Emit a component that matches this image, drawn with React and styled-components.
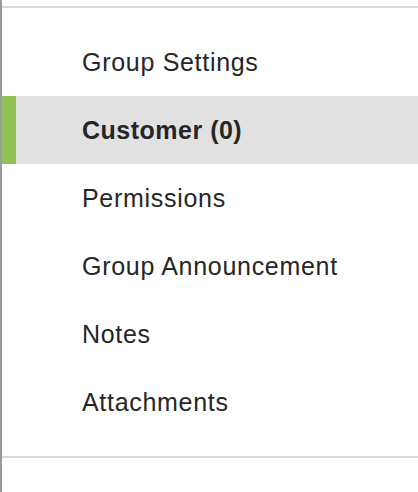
import React from "react";
import styled, { createGlobalStyle } from "styled-components";

const Global = createGlobalStyle`
  html, body { margin: 0; padding: 0; background: #fff; }
  body { font-family: "Helvetica Neue", "Liberation Sans", Arial, sans-serif; }
`;

const Panel = styled.div`
  box-sizing: border-box;
  width: 418px;
  height: 492px;
  border-left: 2px solid #9b9b9b;
  padding-top: 6px;
  display: flex;
  flex-direction: column;
`;

const Rule = styled.div`
  height: 2px;
  background: #d9d9d9;
  flex: none;
`;

const List = styled.ul`
  list-style: none;
  margin: 0;
  padding: 20px 0;
`;

const Item = styled.li`
  box-sizing: border-box;
  height: 68px;
  display: flex;
  align-items: center;
  padding-left: ${(p) => (p.$active ? "66px" : "80px")};
  border-left: ${(p) => (p.$active ? "14px solid #8fc156" : "0")};
  background: ${(p) => (p.$active ? "#e1e1e1" : "transparent")};
  color: #262626;
  font-size: 25px;
  font-weight: ${(p) => (p.$active ? 700 : 400)};
  letter-spacing: ${(p) => (p.$active ? "0.5px" : "0.7px")};
`;

const items = [
  "Group Settings",
  "Customer (0)",
  "Permissions",
  "Group Announcement",
  "Notes",
  "Attachments",
];

export default function App() {
  return (
    <>
      <Global />
      <Panel>
        <Rule />
        <List>
          {items.map((t, i) => (
            <Item key={t} $active={i === 1}>
              {t}
            </Item>
          ))}
        </List>
        <Rule />
      </Panel>
    </>
  );
}
